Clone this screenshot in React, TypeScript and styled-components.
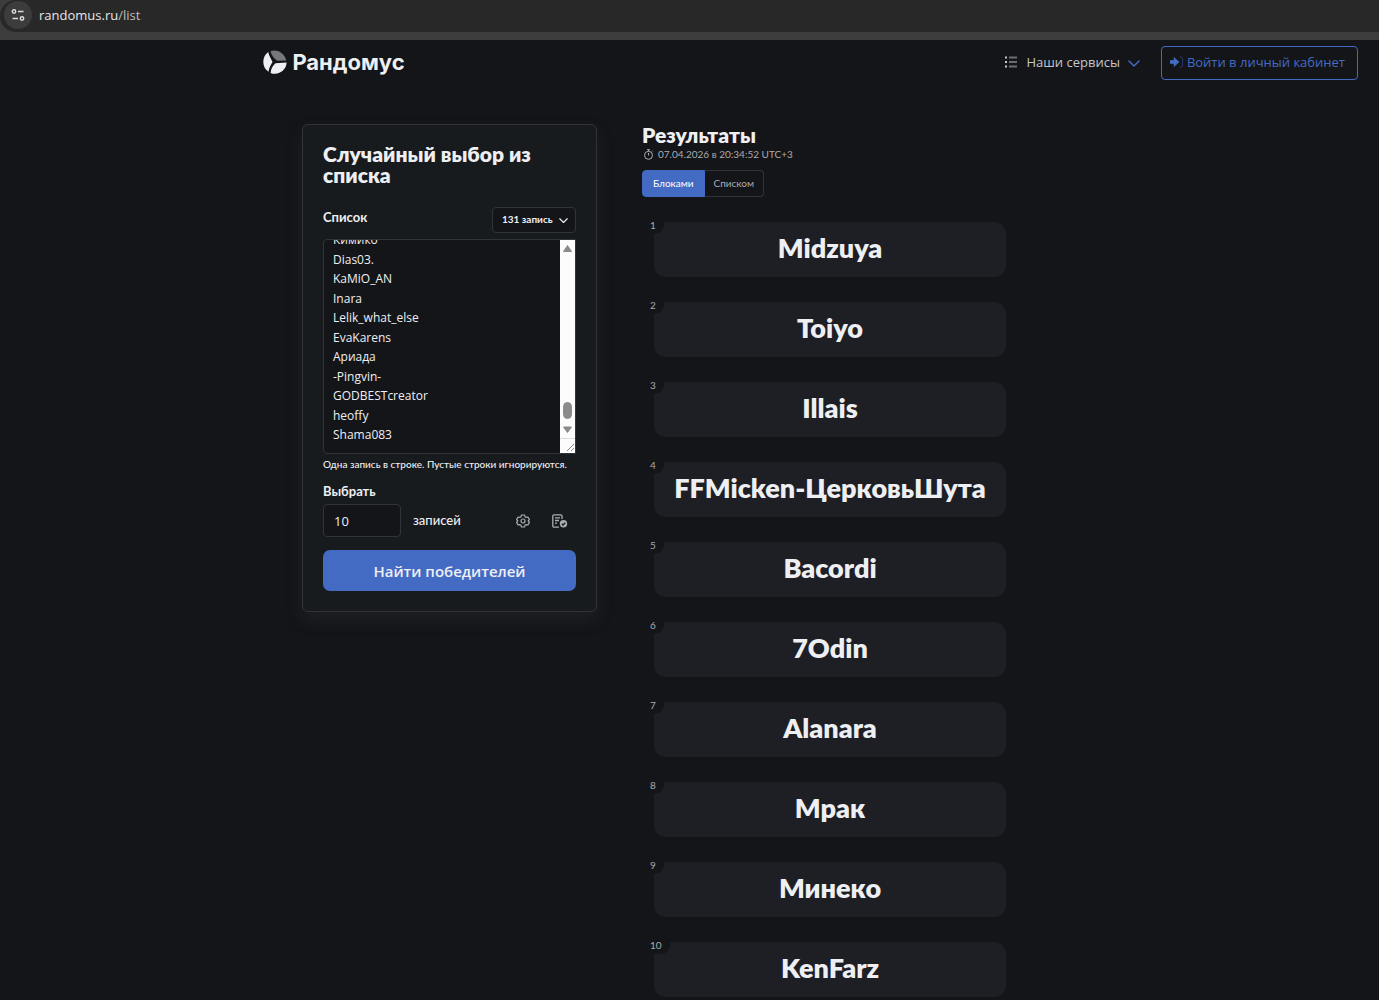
import React, { useEffect, useRef } from 'react';
import styled, { createGlobalStyle, css } from 'styled-components';

const colors = {
  page: '#141519',
  panel: '#181b1e',
  tile: '#1e1f25',
  line: '#303439',
  accent: '#446bc4',
  text: '#eeeff2',
  muted: '#a9acb2',
};

const fonts = {
  rounded: 'Lato, "Open Sans", sans-serif',
  system: '"Open Sans", "Noto Sans", sans-serif',
};

const GlobalStyle = createGlobalStyle`
  *, *::before, *::after { box-sizing: border-box; }
  body {
    margin: 0;
    background: ${colors.page};
    color: ${colors.text};
    font: 13px/20px ${fonts.rounded};
  }
  button, input, textarea { font: inherit; color: inherit; margin: 0; }
  button { cursor: pointer; }
`;

const Page = styled.div`
  min-height: 100vh;
  overflow: hidden;
`;

const BrowserBar = styled.div`
  background: #3c3c3c;
  padding-bottom: 8px;
  font-family: ${fonts.system};
`;

const AddressField = styled.div`
  display: flex;
  align-items: center;
  gap: 7px;
  height: 32px;
  padding: 0 4px 2px;
  background: #282828;
  border-radius: 16px 0 0 16px;
`;

const SiteInfo = styled.button`
  display: grid;
  place-items: center;
  width: 28px;
  height: 28px;
  padding: 0;
  border: 0;
  border-radius: 50%;
  background: #3c3c3c;
  color: #dadada;
`;

const Address = styled.span`
  color: #e6e6e6;
  span { color: #bdbdbd; }
`;

const Header = styled.header`
  display: flex;
  align-items: center;
  justify-content: space-between;
  padding: 6px 21px 0 19.1%;
`;

const Logo = styled.a`
  display: flex;
  align-items: center;
  gap: 5px;
  padding-bottom: 2px;
  color: ${colors.text};
  font: 700 22px/32px Inter, sans-serif;
  text-decoration: none;
`;

const Nav = styled.nav`
  display: flex;
  align-items: center;
  gap: 21px;
  font-family: ${fonts.system};
`;

const Services = styled.button`
  display: flex;
  align-items: center;
  gap: 8px;
  padding: 0 0 2px;
  border: 0;
  background: none;
  color: #c5c7cb;
`;

const Login = styled.a`
  display: flex;
  align-items: center;
  gap: 3px;
  height: 34px;
  padding: 0 12px 2px 8px;
  border: 1px solid ${colors.accent};
  border-radius: 4px;
  color: ${colors.accent};
  text-decoration: none;
`;

const Main = styled.main`
  display: grid;
  grid-template-columns:
    minmax(0, 302fr) minmax(0, 295fr) minmax(0, 45fr) minmax(0, 364fr) minmax(0, 373fr);
  align-items: start;
  padding-top: 44px;
`;

const Panel = styled.form`
  grid-column: 2;
  padding: 18px 20px 20px;
  border: 1px solid ${colors.line};
  border-radius: 6px;
  background: ${colors.panel};
  box-shadow: 0 8px 16px rgba(60, 62, 70, 0.25);
`;

const Title = styled.h1`
  margin: 0 0 22px;
  font-size: 21px;
  line-height: 21px;
  font-weight: 800;
`;

const Row = styled.div`
  display: flex;
  justify-content: space-between;
`;

const Label = styled.label`
  font-weight: 700;
`;

const CountButton = styled.button`
  display: flex;
  align-items: center;
  justify-content: space-between;
  width: 84px;
  height: 26px;
  padding: 0 7px 2px 9px;
  border: 1px solid ${colors.line};
  border-radius: 4px;
  background: ${colors.page};
  font-size: 10px;
  font-weight: 700;
`;

const ListBox = styled.div`
  display: flex;
  height: 215px;
  margin-top: 6px;
  border: 1px solid ${colors.line};
  border-radius: 4px 0 0 4px;
  background: ${colors.page};
`;

const ListArea = styled.textarea`
  flex: 1;
  min-width: 0;
  padding: 8px 9px;
  border: 0;
  outline: 0;
  background: none;
  font-family: ${fonts.system};
  font-size: 12px;
  line-height: 1.625;
  resize: none;
  scrollbar-width: none;
`;

const ScrollTrack = styled.div`
  display: flex;
  width: 15px;
  background: #fcfcfc;
`;

const Hint = styled.p`
  margin: 0 0 7px;
  font-size: 10px;
  font-weight: 500;
  white-space: nowrap;
`;

const PickRow = styled.div`
  display: flex;
  align-items: center;
  margin-top: 3px;
`;

const CountInput = styled.input`
  width: 78px;
  height: 33px;
  margin-right: 12px;
  padding: 0 10px;
  border: 1px solid ${colors.line};
  border-radius: 4px;
  background: ${colors.page};
  font-family: ${fonts.system};
`;

const Unit = styled.span`
  padding-bottom: 2px;
  font-weight: 500;
`;

const Tools = styled.div`
  display: flex;
  gap: 22px;
  margin-left: auto;
  padding-right: 8px;
`;

const ToolButton = styled.button`
  display: grid;
  place-items: center;
  padding: 0;
  border: 0;
  background: none;
  color: ${colors.muted};
`;

const Submit = styled.button`
  width: 100%;
  height: 41px;
  margin-top: 13px;
  border: 0;
  border-radius: 7px;
  background: ${colors.accent};
  font-family: ${fonts.system};
  font-size: 15px;
  font-weight: 600;
`;

const Results = styled.section`
  grid-column: 4;
`;

const ResultsTitle = styled.h2`
  margin: 0;
  font-size: 21px;
  line-height: 21px;
  font-weight: 800;
`;

const Stamp = styled.div`
  display: flex;
  align-items: center;
  gap: 4px;
  padding-left: 1px;
  color: ${colors.muted};
  font-size: 10px;
  line-height: 18px;
`;

const Switch = styled.div`
  display: flex;
  margin-top: 7px;
`;

const SwitchButton = styled.button<{ $active?: boolean }>`
  height: 27px;
  padding: 0 9px 2px;
  border: 1px solid ${colors.line};
  border-left: 0;
  border-radius: 0 4px 4px 0;
  background: none;
  color: ${colors.muted};
  font-size: 10px;
  ${({ $active }) => $active && css`
    padding: 0 10px 2px;
    border: 1px solid ${colors.accent};
    border-radius: 4px 0 0 4px;
    background: ${colors.accent};
    color: #fff;
  `}
`;

const Winners = styled.ol`
  display: grid;
  gap: 25px;
  margin: 25px 0 0;
  padding: 0 0 5px 12px;
  list-style: none;
`;

const Winner = styled.li`
  position: relative;
  height: 55px;
  border-radius: 12px;
  background: ${colors.tile};
  font-size: 27px;
  font-weight: 800;
  line-height: 52px;
  text-align: center;
  white-space: nowrap;
`;

const Place = styled.span`
  position: absolute;
  top: -6px;
  left: -12px;
  padding: 0 8px;
  border-radius: 10px;
  background: ${colors.page};
  color: ${colors.muted};
  font-size: 10px;
  font-weight: 400;
  line-height: 18px;
`;

const names = ['Кимико', 'Dias03.', 'KaMiO_AN', 'Inara', 'Lelik_what_else', 'EvaKarens', 'Ариада', '-Pingvin-', 'GODBESTcreator', 'heoffy', 'Shama083'];

const winners = ['Midzuya', 'Toiyo', 'Illais', 'FFMicken-ЦерковьШута', 'Bacordi', '7Odin', 'Alanara', 'Мрак', 'Минеко', 'KenFarz'];

const TuneIcon = () => (
  <svg width="14" height="14" viewBox="0 0 14 14" fill="none" stroke="currentColor" strokeWidth="1.5" aria-hidden="true">
    <circle cx="3" cy="3.5" r="1.7" /><path d="M7 3.5h5.5M1.5 10.5H7" /><circle cx="11" cy="10.5" r="1.7" />
  </svg>
);

const LogoMark = () => (
  <svg width="24" height="24" viewBox="0 0 24 24" aria-hidden="true">
    <path d="M7.500 1.200C13-.8 21 2 23.300 10.400L14.500 10.700C10.800 8.500 8.700 5.500 7.500 1.200Z" fill="#77787c" />
    <path d="M5.200 2C6 6 8.500 9.500 9.500 12 7.800 15 6 18 5.500 21.800 2 19.500.3 15.800.3 12 .3 8 2 4.300 5.200 2Z" fill="#eeeff2" />
    <path d="M23.600 12.600C23.400 19 18 23.800 12 23.800c-1.700 0-3.200-.3-4.400-.9C8 18.500 10 15.500 12.500 13.300Z" fill="#eeeff2" />
  </svg>
);

const ListIcon = () => (
  <svg width="14" height="14" viewBox="0 0 14 14" fill="none" stroke="currentColor" aria-hidden="true">
    <path d="M1 2.500h2M1 7h2M1 11.500h2" strokeWidth="2" /><path d="M5 2.500h8M5 7h8M5 11.500h8" opacity=".5" strokeWidth="2" />
  </svg>
);

const Chevron = ({ size, color }: { size: number; color: string }) => (
  <svg width={size} height={size} viewBox="0 0 12 12" fill="none" stroke={color} strokeWidth="1.500" strokeLinecap="round" strokeLinejoin="round" aria-hidden="true">
    <path d="M1 5l5 5 5-5" />
  </svg>
);

const LoginIcon = () => (
  <svg width="14" height="12" viewBox="0 0 14 12" aria-hidden="true">
    <path d="M0 4.500h4V1.500L9 6l-5 4.500v-3H0Z" fill="currentColor" stroke="currentColor" strokeLinejoin="round" strokeWidth=".6" />
    <path d="M9.500 1h1.500a1.500 1.500 0 0 1 1.500 1.500v7a1.500 1.500 0 0 1-1.500 1.500H9.500" fill="none" stroke="currentColor" opacity=".4" />
  </svg>
);

const ScrollParts = () => (
  <svg width="15" height="213" viewBox="0 0 15 213" fill="#8b8b8b" stroke="#8b8b8b" strokeLinejoin="round" aria-hidden="true">
    <path d="M7.500 5.500 11.500 11.500h-8ZM3.500 187h8l-4 5.500Z" />
    <rect x="3.500" y="162.500" width="8" height="16" rx="4" />
    <path d="M0 198.500h15" stroke="#dcdcdc" />
    <path d="m7 211 7-7m-3 7 3-3" />
  </svg>
);

const GearIcon = () => (
  <svg width="14" height="14" viewBox="0 0 14 14" fill="none" stroke="currentColor" strokeWidth="1.200" strokeLinejoin="round" aria-hidden="true">
    <path d="M5.500 1h3l.5 1.700 1.200.7 1.700-.4 1.500 2.600L12.200 7l1.200 1.400-1.500 2.600-1.700-.4-1.200.7L8.500 13h-3L5 11.300l-1.200-.7-1.700.4L.6 8.400 1.800 7 .6 5.600 2.100 3l1.700.4L5 2.700Z" />
    <circle cx="7" cy="7" r="2" />
  </svg>
);

const ReportIcon = () => (
  <svg width="16" height="14" viewBox="0 0 16 14" fill="none" stroke="currentColor" strokeWidth="1.300" aria-hidden="true">
    <path d="M10 5V2A1.200 1.200 0 0 0 8.800.8H2A1.200 1.200 0 0 0 .8 2v10A1.200 1.200 0 0 0 2 13.200h5M3 3.800h5M3 6.500h4M3 9.200h2" />
    <circle cx="11.500" cy="9.800" r="3.700" fill="currentColor" stroke="none" />
    <path d="m9.800 9.800 1.300 1.300 2.200-2.300" stroke={colors.panel} />
  </svg>
);

const StopwatchIcon = () => (
  <svg width="11" height="11" viewBox="0 0 11 11" fill="none" stroke="currentColor" aria-hidden="true">
    <circle cx="5.500" cy="6.300" r="4" /><path d="M4 .7h3M5.500.7v1.600M5.500 4v2.500M8.700 2.700l.8-.8" />
  </svg>
);

export default function App() {
  const listRef = useRef<HTMLTextAreaElement>(null);

  useEffect(() => {
    const area = listRef.current;
    if (area) area.scrollTop = area.scrollHeight;
  }, []);

  return (
    <Page>
      <GlobalStyle />
      <BrowserBar>
        <AddressField>
          <SiteInfo type="button"><TuneIcon /></SiteInfo>
          <Address>randomus.ru<span>/list</span></Address>
        </AddressField>
      </BrowserBar>
      <Header>
        <Logo href="#"><LogoMark />Рандомус</Logo>
        <Nav>
          <Services type="button"><ListIcon />Наши сервисы<Chevron size={12} color={colors.accent} /></Services>
          <Login href="#"><LoginIcon />Войти в личный кабинет</Login>
        </Nav>
      </Header>
      <Main>
        <Panel onSubmit={(event) => event.preventDefault()}>
          <Title>Случайный выбор из списка</Title>
          <Row>
            <Label htmlFor="list">Список</Label>
            <CountButton type="button">131 запись<Chevron size={9} color={colors.text} /></CountButton>
          </Row>
          <ListBox>
            <ListArea id="list" ref={listRef} defaultValue={names.join('\n')} spellCheck={false} />
            <ScrollTrack><ScrollParts /></ScrollTrack>
          </ListBox>
          <Hint>Одна запись в строке. Пустые строки игнорируются.</Hint>
          <Label htmlFor="count">Выбрать</Label>
          <PickRow>
            <CountInput id="count" defaultValue="10" inputMode="numeric" />
            <Unit>записей</Unit>
            <Tools>
              <ToolButton type="button"><GearIcon /></ToolButton>
              <ToolButton type="button"><ReportIcon /></ToolButton>
            </Tools>
          </PickRow>
          <Submit type="submit">Найти победителей</Submit>
        </Panel>
        <Results>
          <ResultsTitle>Результаты</ResultsTitle>
          <Stamp><StopwatchIcon />07.04.2026 в 20:34:52 UTC+3</Stamp>
          <Switch>
            <SwitchButton type="button" $active>Блоками</SwitchButton>
            <SwitchButton type="button">Списком</SwitchButton>
          </Switch>
          <Winners>
            {winners.map((name, index) => (
              <Winner key={name}><Place>{index + 1}</Place>{name}</Winner>
            ))}
          </Winners>
        </Results>
      </Main>
    </Page>
  );
}
